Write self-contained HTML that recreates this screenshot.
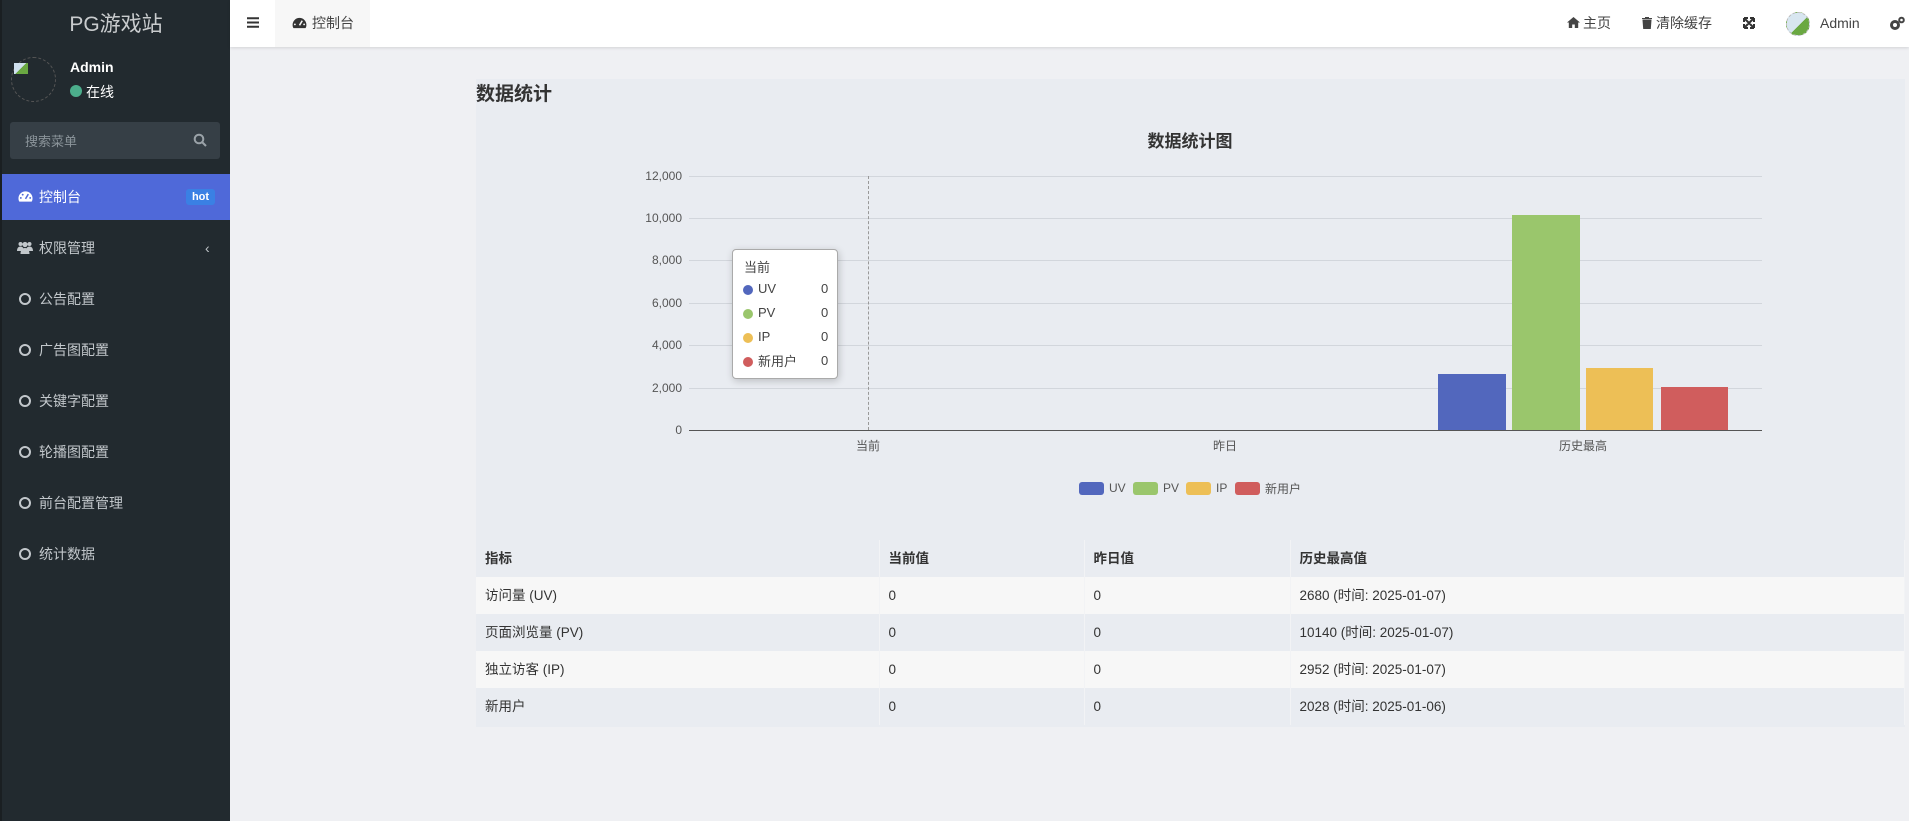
<!DOCTYPE html>
<html><head><meta charset="utf-8">
<style>
*{margin:0;padding:0;box-sizing:border-box}
body{width:1909px;height:821px;overflow:hidden;background:#eff0f3;font-family:"Liberation Sans","Noto Sans CJK SC",sans-serif;position:relative;color:#333}
.abs{position:absolute}
#side{left:0;top:0;width:230px;height:821px;background:#222a2f;border-left:2px solid #1a1f22}
.brand{left:0;top:8px;width:228px;text-align:center;color:#c9ccce;font-size:21px}
.mi{left:0;width:228px;height:50px;color:#c2c7cb;font-size:14px}
.mi span{position:absolute;left:37px;top:50%;transform:translateY(-50%)}
.mi i{position:absolute;left:17px;top:50%;margin-top:-6px;width:12px;height:12px;border:2px solid #c2c7cb;border-radius:50%}
#hdr{left:230px;top:0;width:1679px;height:47px;background:#fff;box-shadow:0 1px 3px rgba(0,0,0,.12)}
.hi{top:0;height:47px;line-height:47px;font-size:14px;color:#444}
#panel{left:476px;top:79px;width:1429px;height:648px;background:#e9ecf1}
.gl{position:absolute;left:689px;width:1073px;height:1px;background:#d2d6dc}
.yl{position:absolute;width:60px;left:622px;text-align:right;font-size:12px;color:#555}
.bar{position:absolute}
table{position:absolute;left:476px;top:540px;width:1429px;border-collapse:collapse;font-size:13.5px;color:#333}
td,th{height:37px;line-height:37px;vertical-align:middle;padding:0 9px;text-align:left;border-right:1px solid #f2f3f5}
th{font-weight:bold;background:#e9ecf1}
tr.o td{background:#f7f7f7}
tr.e td{background:#e9ecf1}
.tt{font-size:13px;color:#444}
.dot{position:absolute;width:10px;height:10px;border-radius:50%;left:10px}
</style></head><body>
<div id="side" class="abs">
 <div class="abs brand">PG游戏站</div>
 <div class="abs" style="left:9px;top:57px;width:45px;height:45px;border:1px dashed #555;border-radius:50%"></div>
 <div class="abs" style="left:12px;top:63px;width:14px;height:11px;background:linear-gradient(135deg,#cfe0ee 50%,#6aa842 50%)"></div>
 <div class="abs" style="left:68px;top:59px;color:#fff;font-weight:bold;font-size:14px">Admin</div>
 <div class="abs" style="left:68px;top:85px;width:12px;height:12px;border-radius:50%;background:#4cae8c"></div>
 <div class="abs" style="left:84px;top:82px;color:#fff;font-size:14px">在线</div>
 <div class="abs" style="left:8px;top:122px;width:210px;height:37px;background:#363f46;border-radius:3px"></div>
 <div class="abs" style="left:23px;top:131px;color:#8b949a;font-size:13px">搜索菜单</div>
 <svg class="abs" style="left:191px;top:133px" width="14" height="14" viewBox="0 0 14 14"><circle cx="6" cy="6" r="4.3" fill="none" stroke="#9aa2a8" stroke-width="2"/><path d="M9 9l4 4" stroke="#9aa2a8" stroke-width="2"/></svg>
 <div class="abs mi" style="top:174px;height:46px;background:#4f69d9;color:#fff"><svg style="position:absolute;left:16px;top:16px" width="15" height="13" viewBox="0 0 16 13"><path d="M8 1A7.5 7.5 0 0 0 .5 8.5c0 1.5.4 2.8 1 3.5h13c.6-.7 1-2 1-3.5A7.5 7.5 0 0 0 8 1z" fill="#fff"/><path d="M8 9l3-5" stroke="#4f69d9" stroke-width="1.6"/><circle cx="3" cy="8" r="1" fill="#4f69d9"/><circle cx="13" cy="8" r="1" fill="#4f69d9"/><circle cx="5" cy="4.5" r="1" fill="#4f69d9"/></svg><span>控制台</span>
  <div style="position:absolute;left:184px;top:15px;width:29px;height:16px;background:#3a80e4;border-radius:3px;font-size:11px;font-weight:bold;text-align:center;line-height:16px">hot</div></div>
 <div class="abs mi" style="top:223px"><svg style="position:absolute;left:15px;top:18px" width="16" height="13" viewBox="0 0 16 13"><circle cx="3.5" cy="3" r="2" fill="#c2c7cb"/><circle cx="12.5" cy="3" r="2" fill="#c2c7cb"/><circle cx="8" cy="3.5" r="2.6" fill="#c2c7cb"/><path d="M0 10c0-3 1.5-4.5 3.5-4.5S7 7 7 10zM9 10c0-3 1.5-4.5 3.5-4.5S16 7 16 10zM3.5 13c0-4 2-6 4.5-6s4.5 2 4.5 6z" fill="#c2c7cb"/></svg><span>权限管理</span><b style="position:absolute;left:203px;top:17px;font-weight:normal;font-size:14px">‹</b></div>
 <div class="abs mi" style="top:274px"><i></i><span>公告配置</span></div>
 <div class="abs mi" style="top:325px"><i></i><span>广告图配置</span></div>
 <div class="abs mi" style="top:376px"><i></i><span>关键字配置</span></div>
 <div class="abs mi" style="top:427px"><i></i><span>轮播图配置</span></div>
 <div class="abs mi" style="top:478px"><i></i><span>前台配置管理</span></div>
 <div class="abs mi" style="top:529px"><i></i><span>统计数据</span></div>
</div>
<div id="hdr" class="abs">
 <svg class="abs" style="left:17px;top:17px" width="12" height="11" viewBox="0 0 12 11"><path d="M0 1.2h12M0 5.5h12M0 9.8h12" stroke="#333" stroke-width="2"/></svg>
 <div class="abs" style="left:45px;top:0;width:95px;height:47px;background:#f7f7f7"></div>
 <svg class="abs" style="left:62px;top:17px" width="15" height="12" viewBox="0 0 16 13"><path d="M8 1A7.5 7.5 0 0 0 .5 8.5c0 1.5.4 2.8 1 3.5h13c.6-.7 1-2 1-3.5A7.5 7.5 0 0 0 8 1z" fill="#333"/><path d="M8 9l3-5" stroke="#f7f7f7" stroke-width="1.6"/><circle cx="3" cy="8" r="1" fill="#f7f7f7"/><circle cx="13" cy="8" r="1" fill="#f7f7f7"/></svg>
 <div class="abs hi" style="left:82px">控制台</div>
 <svg class="abs" style="left:1337px;top:17px" width="13" height="11" viewBox="0 0 13 11"><path d="M6.5 0L0 5.5h1.8V11h3.4V7.5h2.6V11h3.4V5.5H13z" fill="#444"/></svg>
 <div class="abs hi" style="left:1353px">主页</div>
 <svg class="abs" style="left:1412px;top:17px" width="10" height="12" viewBox="0 0 10 12"><path d="M0 1.5h10M3.5 1.5V0h3v1.5M1 3h8l-.7 9H1.7z" fill="#444" stroke="#444"/></svg>
 <div class="abs hi" style="left:1426px">清除缓存</div>
 <svg class="abs" style="left:1513px;top:17px" width="12" height="12" viewBox="0 0 12 12"><path d="M1 1l10 10M11 1L1 11M1 1h4M1 1v4M11 1h-4M11 1v4M1 11h4M1 11v-4M11 11h-4M11 11v-4" stroke="#333" stroke-width="2"/></svg>
 <div class="abs" style="left:1556px;top:12px;width:24px;height:24px;border:1px dashed #bbb;border-radius:50%;background:linear-gradient(135deg,#d8e6f0 55%,#6aa842 55%)"></div>
 <div class="abs hi" style="left:1590px">Admin</div>
 <svg class="abs" style="left:1659px;top:16px" width="16" height="15" viewBox="0 0 16 15"><circle cx="6" cy="9" r="3.5" fill="none" stroke="#444" stroke-width="3"/><circle cx="12.5" cy="4" r="2.3" fill="none" stroke="#444" stroke-width="2"/></svg>
</div>
<div id="panel" class="abs"></div>
<div class="abs" style="left:476px;top:79px;font-size:19px;font-weight:bold;color:#333">数据统计</div>
<div class="abs" style="left:1090px;top:127px;width:200px;text-align:center;font-size:17px;font-weight:bold;color:#333">数据统计图</div>
<div class="gl" style="top:176px"></div><div class="gl" style="top:218px"></div><div class="gl" style="top:260px"></div><div class="gl" style="top:303px"></div><div class="gl" style="top:345px"></div><div class="gl" style="top:388px"></div>
<div class="abs" style="left:689px;top:430px;width:1073px;height:1px;background:#555"></div>
<div class="yl" style="top:169px">12,000</div><div class="yl" style="top:211px">10,000</div><div class="yl" style="top:253px">8,000</div><div class="yl" style="top:296px">6,000</div><div class="yl" style="top:338px">4,000</div><div class="yl" style="top:381px">2,000</div><div class="yl" style="top:423px">0</div>
<div class="abs" style="left:868px;top:176px;height:254px;border-left:1px dashed #999"></div>
<div class="abs" style="left:856px;top:437px;font-size:12px;color:#555">当前</div>
<div class="abs" style="left:1213px;top:437px;font-size:12px;color:#555">昨日</div>
<div class="abs" style="left:1559px;top:437px;font-size:12px;color:#555">历史最高</div>
<div class="bar" style="left:1438px;top:374px;width:68px;height:56px;background:#5267bd"></div>
<div class="bar" style="left:1512px;top:215px;width:68px;height:215px;background:#9ac66c"></div>
<div class="bar" style="left:1586px;top:368px;width:67px;height:62px;background:#edbf56"></div>
<div class="bar" style="left:1661px;top:387px;width:67px;height:43px;background:#d05d5d"></div>
<div class="abs" style="left:1079px;top:482px;width:25px;height:13px;border-radius:3px;background:#5267bd"></div>
<div class="abs" style="left:1109px;top:481px;font-size:12px;color:#555">UV</div>
<div class="abs" style="left:1133px;top:482px;width:25px;height:13px;border-radius:3px;background:#9ac66c"></div>
<div class="abs" style="left:1163px;top:481px;font-size:12px;color:#555">PV</div>
<div class="abs" style="left:1186px;top:482px;width:25px;height:13px;border-radius:3px;background:#edbf56"></div>
<div class="abs" style="left:1216px;top:481px;font-size:12px;color:#555">IP</div>
<div class="abs" style="left:1235px;top:482px;width:25px;height:13px;border-radius:3px;background:#d05d5d"></div>
<div class="abs" style="left:1265px;top:480px;font-size:12px;color:#555">新用户</div>
<div class="abs tt" style="left:732px;top:249px;width:106px;height:130px;background:#fff;border:1px solid #aaa;border-radius:4px;box-shadow:1px 2px 8px rgba(0,0,0,.2)">
 <div class="abs" style="left:11px;top:7px">当前</div>
 <div class="dot" style="top:35px;background:#5267bd"></div><div class="abs" style="left:25px;top:31px">UV</div><div class="abs" style="left:88px;top:31px">0</div>
 <div class="dot" style="top:59px;background:#9ac66c"></div><div class="abs" style="left:25px;top:55px">PV</div><div class="abs" style="left:88px;top:55px">0</div>
 <div class="dot" style="top:83px;background:#edbf56"></div><div class="abs" style="left:25px;top:79px">IP</div><div class="abs" style="left:88px;top:79px">0</div>
 <div class="dot" style="top:107px;background:#d05d5d"></div><div class="abs" style="left:25px;top:101px">新用户</div><div class="abs" style="left:88px;top:103px">0</div>
</div>
<table>
<tr><th style="width:403px">指标</th><th style="width:205px">当前值</th><th style="width:206px">昨日值</th><th>历史最高值</th></tr>
<tr class="o"><td>访问量 (UV)</td><td>0</td><td>0</td><td>2680 (时间: 2025-01-07)</td></tr>
<tr class="e"><td>页面浏览量 (PV)</td><td>0</td><td>0</td><td>10140 (时间: 2025-01-07)</td></tr>
<tr class="o"><td>独立访客 (IP)</td><td>0</td><td>0</td><td>2952 (时间: 2025-01-07)</td></tr>
<tr class="e"><td>新用户</td><td>0</td><td>0</td><td>2028 (时间: 2025-01-06)</td></tr>
</table>
</body></html>
